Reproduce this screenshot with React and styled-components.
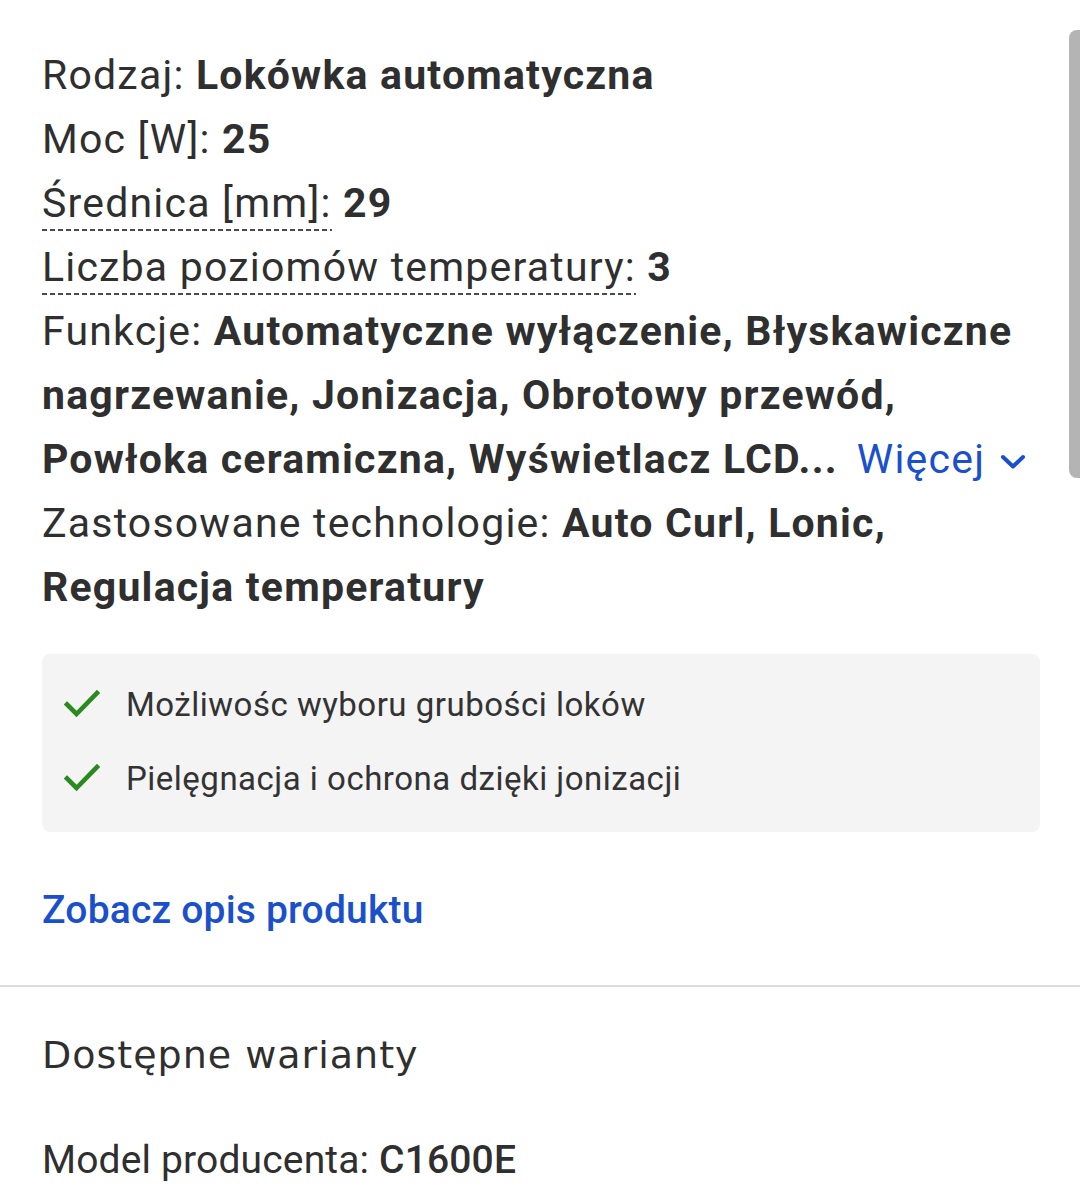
import styled, { createGlobalStyle } from "styled-components";

const GlobalStyle = createGlobalStyle`
  html, body {
    margin: 0;
    padding: 0;
    background: #fff;
  }
  body {
    font-family: Roboto, "Liberation Sans", Arial, sans-serif;
    color: #2f2f2f;
  }
`;

const specs = [
  { label: "Rodzaj", value: "Lokówka automatyczna" },
  { label: "Moc [W]", value: "25" },
  { label: "Średnica [mm]", value: "29", hint: true },
  { label: "Liczba poziomów temperatury", value: "3", hint: true },
];

const highlights = [
  "Możliwośc wyboru grubości loków",
  "Pielęgnacja i ochrona dzięki jonizacji",
];

function CheckIcon() {
  return (
    <svg width="36" height="28" viewBox="0 0 36 28" fill="none">
      <path
        d="M3 14.5 L12.5 24 L33 3"
        stroke="#2a8a1f"
        strokeWidth="4.6"
        strokeLinecap="square"
      />
    </svg>
  );
}

function ChevronDown() {
  return (
    <svg width="28" height="20" viewBox="0 0 28 20" fill="none">
      <path
        d="M4 5 L14 14.5 L24 5"
        stroke="#1a50cc"
        strokeWidth="4"
        strokeLinecap="round"
        strokeLinejoin="round"
      />
    </svg>
  );
}

export default function App() {
  return (
    <>
      <GlobalStyle />
      <Page>
        <Specs>
          {specs.map(s => (
            <SpecLine key={s.label}>
              <Label $hint={s.hint}>{s.label}:</Label> <Value>{s.value}</Value>
            </SpecLine>
          ))}
          <SpecLine>
            <Label>Funkcje:</Label>{" "}
            <Value>
              Automatyczne wyłączenie, Błyskawiczne nagrzewanie, Jonizacja,
              Obrotowy przewód, Powłoka ceramiczna, Wyświetlacz LCD...
            </Value>
            <MoreLink>
              Więcej
              <ChevronDown />
            </MoreLink>
          </SpecLine>
          <SpecLine>
            <Label>Zastosowane technologie:</Label>{" "}
            <Value>Auto Curl, Lonic, Regulacja temperatury</Value>
          </SpecLine>
        </Specs>

        <Highlights>
          {highlights.map(h => (
            <HighlightRow key={h}>
              <CheckIcon />
              <span>{h}</span>
            </HighlightRow>
          ))}
        </Highlights>

        <DescLink>Zobacz opis produktu</DescLink>

        <Divider />

        <Variants>
          <SectionTitle>Dostępne warianty</SectionTitle>
          <SpecLine $compact>
            <Label>Model producenta:</Label> <Strong>C1600E</Strong>
          </SpecLine>
        </Variants>

        <Scrollbar />
      </Page>
    </>
  );
}

const Page = styled.div`
  position: relative;
  width: 1080px;
  height: 1196px;
  overflow: hidden;
`;

const Specs = styled.div`
  padding: 43px 40px 0 42px;
`;

const SpecLine = styled.div`
  font-size: ${p => (p.$compact ? "39px" : "41px")};
  letter-spacing: ${p => (p.$compact ? "0.15px" : "1.2px")};
  line-height: 64px;
  color: #2f2f2f;
`;

const Label = styled.span`
  font-weight: 400;
  ${p =>
    p.$hint &&
    `
    padding-bottom: 4px;
    background-image: repeating-linear-gradient(
      to right,
      #4a4a4a 0 5px,
      transparent 5px 8px
    );
    background-size: 100% 2px;
    background-repeat: no-repeat;
    background-position: left bottom;
  `}
`;

const Value = styled.span`
  font-weight: 700;
`;

const Strong = styled.span`
  font-weight: 500;
`;

const MoreLink = styled.span`
  display: inline-flex;
  align-items: center;
  gap: 14px;
  margin-left: 19px;
  color: #1a50cc;
  font-weight: 400;
  cursor: pointer;
  vertical-align: top;
  height: 64px;

  & svg {
    margin-top: 6px;
  }
`;

const Highlights = styled.ul`
  list-style: none;
  margin: 35px 40px 0 42px;
  padding: 26px 22px 30px;
  background: #f4f4f4;
  border-radius: 8px;
  display: flex;
  flex-direction: column;
  gap: 26px;
`;

const HighlightRow = styled.li`
  display: flex;
  align-items: center;
  gap: 26px;
  height: 48px;
  font-size: 33px;
  letter-spacing: 0.5px;
  color: #333;
`;

const DescLink = styled.div`
  margin: 54px 0 0 42px;
  font-size: 39px;
  letter-spacing: 0.2px;
  line-height: 48px;
  font-weight: 500;
  color: #1a50cc;
  cursor: pointer;
`;

const Divider = styled.hr`
  margin: 51px 0 0;
  border: 0;
  height: 2px;
  background: #dcdcdc;
`;

const Variants = styled.div`
  padding: 44px 40px 0 42px;
`;

const SectionTitle = styled.h2`
  margin: 0 0 49px;
  font-family: "DejaVu Sans", "Open Sans", sans-serif;
  font-weight: 400;
  font-size: 38px;
  letter-spacing: 1px;
  line-height: 48px;
  color: #2f2f2f;
`;

const Scrollbar = styled.div`
  position: absolute;
  top: 30px;
  right: 0;
  width: 11px;
  height: 448px;
  background: #b4b4b4;
  border-radius: 8px 0 0 8px;
`;
